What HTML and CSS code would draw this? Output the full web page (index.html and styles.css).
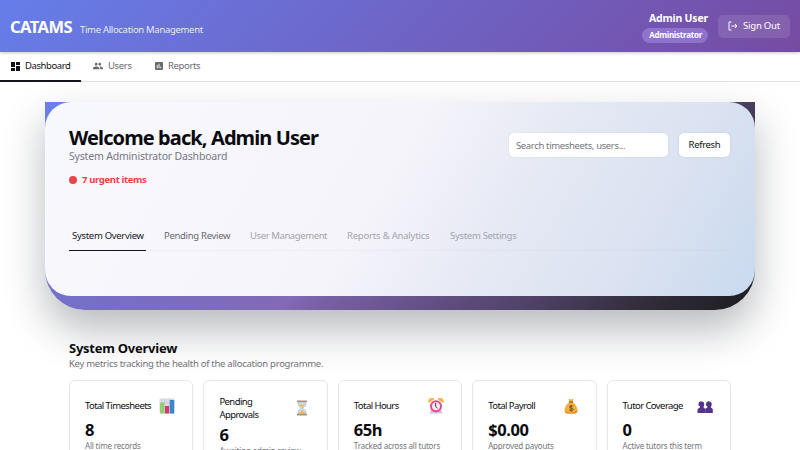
FILE: index.html
```html
<!DOCTYPE html>
<html lang="en">
<head>
<meta charset="utf-8">
<title>CATAMS</title>
<link rel="stylesheet" href="styles.css">
</head>
<body>
<header class="topbar">
  <div class="brand"><span class="brand-name">CATAMS</span><span class="brand-sub">Time Allocation Management</span></div>
  <div class="account">
    <div class="identity"><span class="user-name">Admin User</span><span class="role">Administrator</span></div>
    <button class="signout"><svg width="10" height="10" viewBox="0 0 20 20" fill="none" stroke="currentColor" stroke-width="2"><path d="M7 2H2v16h5M7 10h11M14 6l4 4-4 4"/></svg><span>Sign Out</span></button>
  </div>
</header>
<nav class="mainnav">
  <a class="nav-item active"><svg width="9" height="9" viewBox="3 3 18 18" fill="currentColor"><path d="M3 13h8V3H3v10zm0 8h8v-6H3v6zm10 0h8V11h-8v10zm0-18v6h8V3h-8z"/></svg><span>Dashboard</span></a>
  <a class="nav-item users"><svg width="10" height="10" viewBox="1 2 22 20" fill="currentColor"><path d="M16 11c1.66 0 3-1.34 3-3s-1.34-3-3-3-3 1.34-3 3 1.34 3 3 3zm-8 0c1.66 0 3-1.34 3-3S9.66 5 8 5 5 6.34 5 8s1.34 3 3 3zm0 2c-2.33 0-7 1.17-7 3.5V19h14v-2.5C15 14.17 10.33 13 8 13zm8 0c-.3 0-.6 0-1 .05 1.2.84 2 1.97 2 3.45V19h6v-2.5c0-2.33-4.67-3.5-7-3.5z"/></svg><span>Users</span></a>
  <a class="nav-item"><svg width="8" height="8" viewBox="3 3 18 18" fill="currentColor"><path d="M19 3H5a2 2 0 0 0-2 2v14a2 2 0 0 0 2 2h14a2 2 0 0 0 2-2V5a2 2 0 0 0-2-2zM9 17H7v-7h2v7zm4 0h-2V7h2v10zm4 0h-2v-4h2v4z"/></svg><span>Reports</span></a>
</nav>
<main>
  <section class="hero">
    <div class="hero-inner">
      <div class="hero-top">
        <div>
          <h1>Welcome back, Admin User</h1>
          <p class="hero-sub">System Administrator Dashboard</p>
          <p class="urgent"><i></i><span>7 urgent items</span></p>
        </div>
        <div class="tools"><input class="search" placeholder="Search timesheets, users..."><button class="refresh">Refresh</button></div>
      </div>
      <div class="tabs">
        <a class="tab selected">System Overview</a><a class="tab pending">Pending Review</a><a class="tab off um">User Management</a><a class="tab off ra">Reports &amp; Analytics</a><a class="tab off">System Settings</a>
      </div>
    </div>
  </section>
  <section class="overview">
    <h2>System Overview</h2>
    <p class="lead">Key metrics tracking the health of the allocation programme.</p>
    <div class="cards">
      <article class="card"><div class="card-head"><h3>Total Timesheets</h3>
        <svg width="16" height="16" viewBox="0 0 16 16"><rect x=".5" y=".5" width="15" height="15" rx="1" fill="#d9dae3"/><path d="M.5 5h15M.5 10h15M5.500.5v15M10.500.5v15" stroke="#c3c5d2" stroke-width=".6"/><rect x="1" y="4.500" width="4.300" height="11" fill="#8fd070"/><rect x="6" y="8" width="4" height="7.500" fill="#dc3567"/><rect x="10.800" y="2" width="4.400" height="13.500" fill="#3c86d0"/></svg></div>
        <strong>8</strong><small>All time records</small></article>
      <article class="card"><div class="card-head"><h3>Pending<br>Approvals</h3>
        <svg width="16" height="16" viewBox="0 0 16 16"><path d="M4 2h8v2.500c0 2-3 2.700-3 3.500s3 1.700 3 4V14H4v-2c0-2.300 3-3.200 3-4S4 6.500 4 4.500z" fill="#cbdde8" stroke="#9aabbc" stroke-width=".5"/><path d="M5 4.500h6L8 8zM8 9.500 11.500 14h-7z" fill="#f0bd60"/><path d="M3 .5h10v1.600H3zM3 13.800h10v1.700H3z" fill="#a4937f"/></svg></div>
        <strong>6</strong><small>Awaiting admin review</small></article>
      <article class="card"><div class="card-head"><h3>Total Hours</h3>
        <svg width="16" height="16" viewBox="0 0 16 16"><path d="M1 5a3.300 3.300 0 0 1 5.500-3.800zM15 5a3.300 3.300 0 0 0-5.500-3.800z" fill="#f6b34e"/><path d="M3 12 1.500 15.500h13L13 12z" fill="#d8bdea"/><circle cx="8" cy="8.200" r="5" fill="#f4ecf9" stroke="#e34b80" stroke-width="2"/><path d="M7.600 5v3.500l2 1.800" fill="none" stroke="#41345c"/></svg></div>
        <strong>65h</strong><small>Tracked across all tutors</small></article>
      <article class="card"><div class="card-head"><h3>Total Payroll</h3>
        <svg width="16" height="16" viewBox="0 0 16 16"><path d="M5.500.8 8 1.500l2.500-.7L9.500 4c2.500 1.500 5 5 5 8.500 0 2-1 3-3 3h-7c-2 0-3-1-3-3C1.500 9 4 5.500 6.500 4z" fill="#f3ae3c"/><path d="M2 13c3 2 9 2 12.400-1 0 2.500-.9 3.500-2.900 3.500h-7C3 15.500 2 14.500 2 13z" fill="#e38d2d"/><path d="M5.800 4h4.400" stroke="#8c5c38" stroke-width="1.200"/><path d="M10 8.300C9.500 7.300 6.500 7.300 6.500 9c0 1.500 3.700.8 3.700 2.400 0 1.600-3.400 1.500-4 .2M8.200 7v6.500" fill="none" stroke="#68472f" stroke-width=".9"/></svg></div>
        <strong>$0.00</strong><small>Approved payouts</small></article>
      <article class="card"><div class="card-head"><h3>Tutor Coverage</h3>
        <svg width="16" height="16" viewBox="0 0 16 16"><g fill="#533589"><path d="M1.400 6a2.900 3.100 0 1 1 5.600 1.500l-.5 2c1 .5 1.900 1 1.900 2.500v3H.5v-3C.5 10.500 2 10 3 9.500V8.500C1.700 8 1.400 7 1.400 6zM8.900 6a2.900 3.100 0 1 1 5.600 1.500l-.7 2c1.200.5 2 1 2 2.500v3H8v-3c0-1.500 1-2 2.400-2.500V8.500C9.200 8 8.900 7 8.900 6z"/></g><path d="M8.200 11v4" stroke="#8a6fb6" stroke-width=".5"/></svg></div>
        <strong>0</strong><small>Active tutors this term</small></article>
    </div>
  </section>
</main>
</body>
</html>
```
FILE: styles.css
```css
* { box-sizing: border-box; }
html { height: 450px; overflow: hidden; }
body { margin: 0; height: 450px; overflow: hidden; background: #fff; color: #0b0b0f; font-family: "Noto Sans", "Open Sans", sans-serif; font-size: 9.5px; line-height: 12px; }
h1, h2, h3, p { margin: 0; }
button, input { font: inherit; border: 0; }
svg { flex: none; display: block; }
.topbar { height: 52px; padding: 0 10px; display: flex; justify-content: space-between; align-items: center; color: #fff; background: linear-gradient(135deg, #667eea, #764ba2); box-shadow: 0 1px 3px rgba(30, 20, 70, .25); position: relative; z-index: 1; }
.brand { display: flex; align-items: baseline; gap: 8px; padding-top: 1px; white-space: nowrap; }
.brand-name { width: 62px; font-size: 16.5px; line-height: 22px; font-weight: 700; letter-spacing: -.55px; }
.brand-sub { font-size: 9.5px; letter-spacing: -.31px; color: rgba(255, 255, 255, .88); }
.account { display: flex; align-items: center; gap: 10px; }
.identity { display: flex; flex-direction: column; align-items: flex-end; gap: 3px; padding-top: 1px; }
.user-name { font-size: 10.5px; font-weight: 700; line-height: 14px; letter-spacing: -.2px; }
.role { height: 15px; padding: 0 6px 0 7px; line-height: 14px; border-radius: 8px; background: rgba(174, 148, 235, .48); font-size: 8px; font-weight: 700; letter-spacing: -.25px; }
.signout { width: 72px; height: 23px; padding: 0; display: flex; align-items: center; justify-content: center; gap: 5px; border-radius: 5px; color: #fff; background: rgba(255, 255, 255, .11); letter-spacing: -.2px; }
.mainnav { height: 30px; display: flex; align-items: stretch; border-bottom: 1px solid #e3e3e6; }
.nav-item { display: flex; align-items: center; gap: 5px; padding: 0 0 1px 11px; color: #68686e; letter-spacing: -.35px; }
.nav-item.active { width: 81px; color: #111116; border-bottom: 2px solid #15151c; padding-bottom: 0; margin-bottom: -1px; letter-spacing: -.42px; }
.nav-item.users { width: 63px; padding-left: 12px; }
main { padding: 20px 45px 0; }
.hero { height: 208px; border-radius: 0 0 40px 40px; background: linear-gradient(135deg, #697fe8 0%, #7470c9 23%, #826ab6 48%, #7860a5 52%, #4f4166 75%, #302c38 88%, #1c1c20 100%); box-shadow: 0 20px 40px rgba(15, 20, 35, .29); }
.hero-inner { height: 194px; padding: 23px 25px 0 24px; border-radius: 26px; background: linear-gradient(120deg, #f8f9fe 0%, #f6f4fb 46%, #e5e9f4 65%, #dbe2f1 82%, #c9daef 100%); }
.hero-top { height: 99px; display: flex; justify-content: space-between; }
h1 { font-size: 20px; line-height: 25px; letter-spacing: -.9px; white-space: nowrap; }
.hero-sub { font-size: 10.5px; line-height: 13px; letter-spacing: -.18px; color: #77777f; }
.urgent { display: flex; align-items: center; gap: 5px; margin-top: 11px; color: #eb4048; font-size: 9.5px; font-weight: 700; letter-spacing: -.35px; }
.urgent i { width: 8px; height: 8px; border-radius: 50%; background: #ec4348; }
.tools { display: flex; gap: 11px; padding-top: 8px; align-items: flex-start; }
.search { width: 159px; height: 24px; padding: 0 7px; border-radius: 5px; background: #fff; letter-spacing: -.35px; box-shadow: 0 0 2px rgba(70, 90, 130, .12); }
.search::placeholder { color: #75757b; opacity: 1; }
.refresh { width: 51px; height: 24px; padding: 0; border-radius: 5px; background: #fff; color: #101014; letter-spacing: -.32px; box-shadow: 0 0 2px rgba(70, 90, 130, .15); }
.tabs { height: 27px; display: flex; border-bottom: 1px solid rgba(140, 145, 165, .07); white-space: nowrap; letter-spacing: -.3px; }
.tab { height: 27px; padding-top: 6px; color: #68686e; }
.tab.selected { width: 77px; padding-left: 3px; margin-right: 18px; color: #17171d; border-bottom: 1px solid #15151c; }
.tab.pending { width: 86px; }
.tab.off { color: #a4a4ad; }
.um { width: 97px; letter-spacing: -.4px; }
.ra { width: 103px; letter-spacing: -.2px; }
.overview { padding: 31px 24px 0; }
h2 { font-size: 13px; line-height: 15px; letter-spacing: -.25px; }
.lead { line-height: 15px; color: #717178; letter-spacing: -.28px; }
.cards { display: grid; grid-template-columns: repeat(5, 1fr); gap: 10px; margin-top: 9px; }
.card { height: 96px; padding: 14px 17px 0 15px; border: 1px solid #e6e6e9; border-radius: 6px; background: #fff; }
.card-head { min-height: 21px; display: flex; align-items: center; justify-content: space-between; }
h3 { font-size: 9.5px; font-weight: 400; line-height: 13px; letter-spacing: -.57px; white-space: nowrap; }
.card strong { display: block; margin-top: 4px; font-size: 16.5px; line-height: 20px; letter-spacing: -.4px; }
.card small { display: block; font-size: 8px; line-height: 11px; letter-spacing: -.18px; color: #75757b; white-space: nowrap; }
```
